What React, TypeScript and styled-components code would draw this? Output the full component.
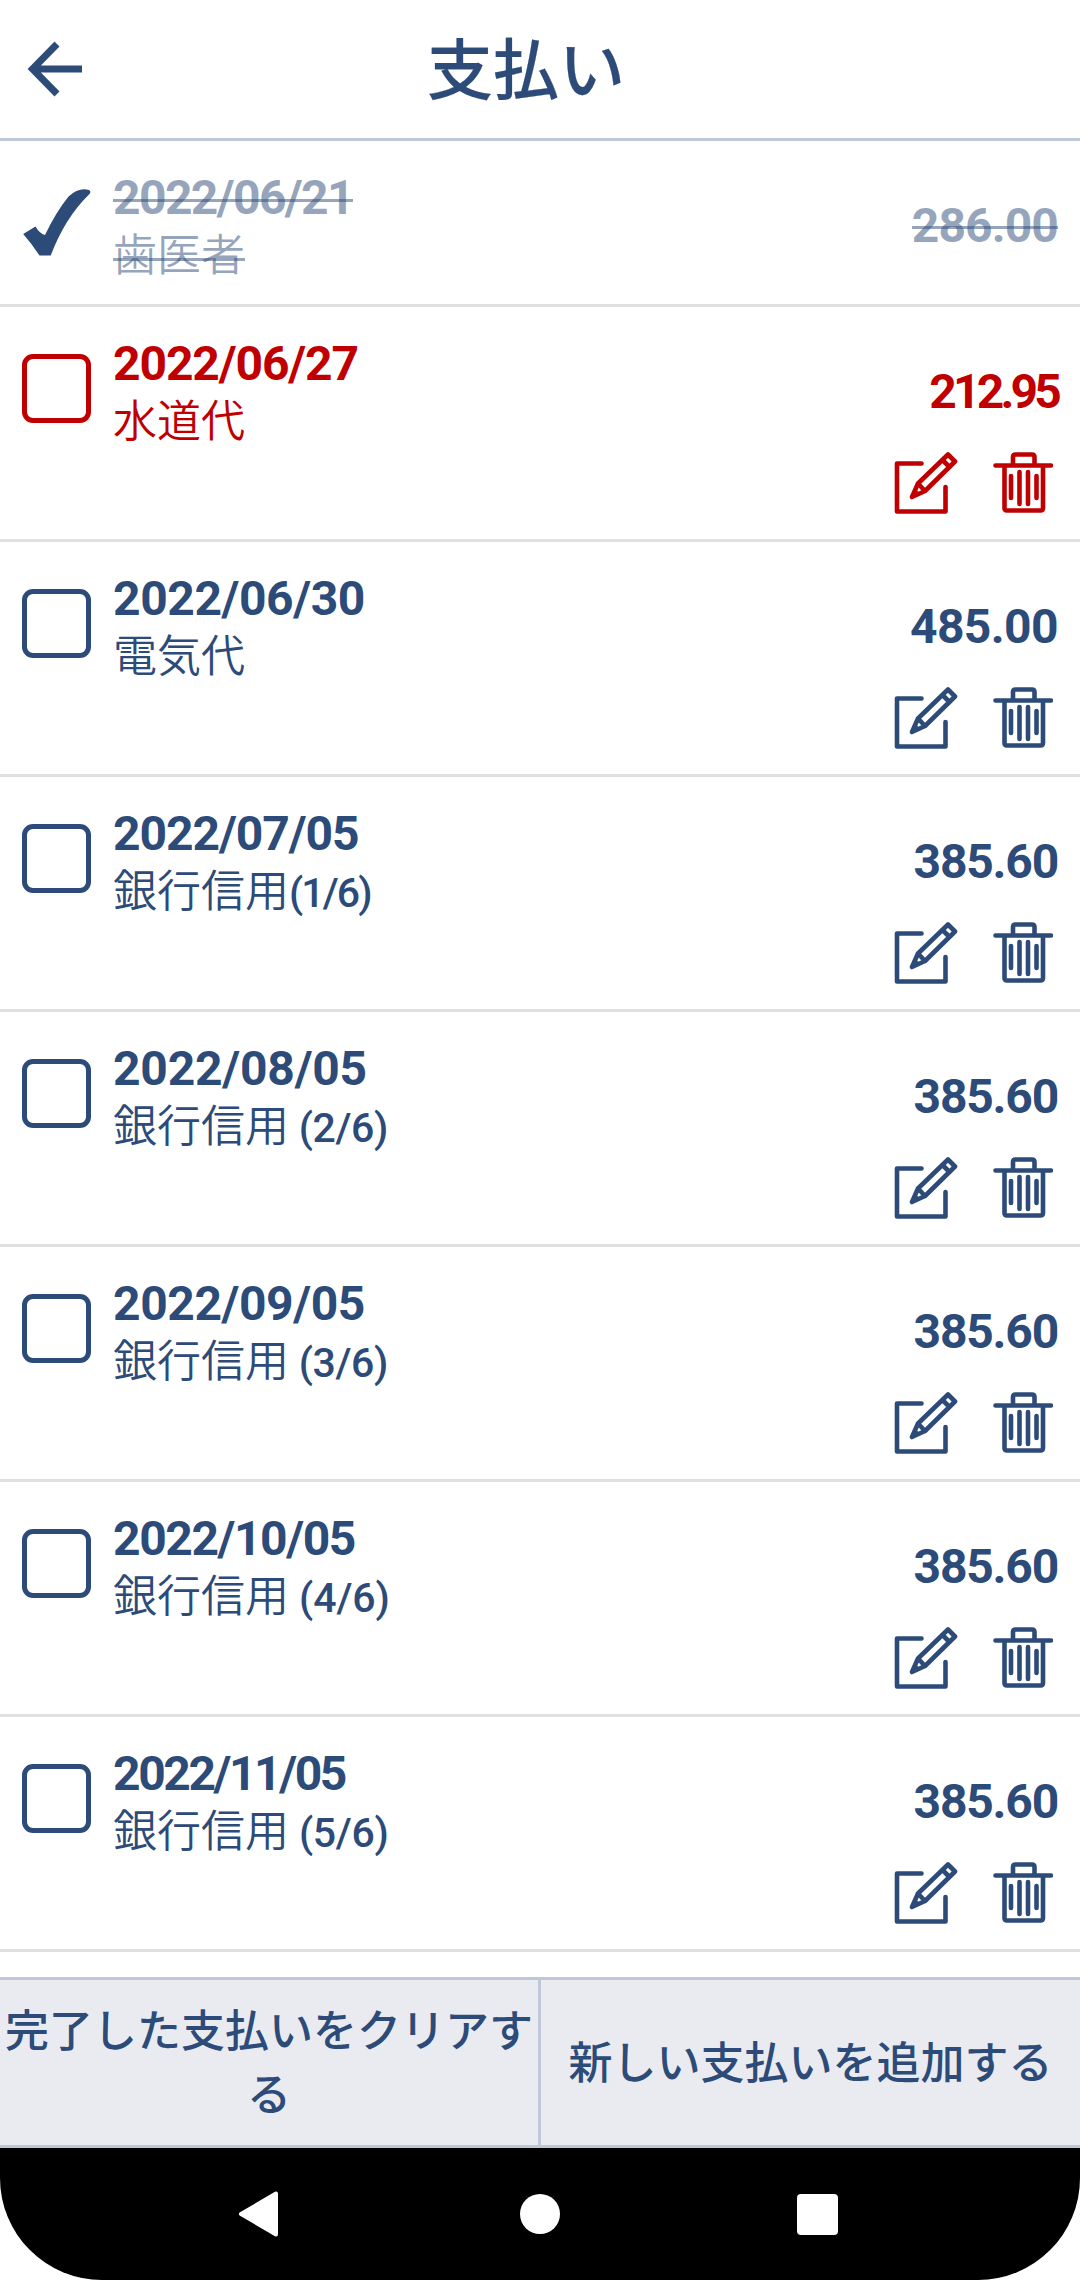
import React from "react";
import styled, { createGlobalStyle } from "styled-components";

const NAVY = "#2d4b78";
const RED = "#c00000";
const FADED = "rgba(45, 75, 120, 0.5)";
const LATIN = 'Roboto, "Noto Sans CJK JP", sans-serif';
const JP = '"Noto Sans CJK JP", sans-serif';

const Global = createGlobalStyle`
  * { box-sizing: border-box; }
  body { margin: 0; background: #fff; }
  button { border: 0; background: none; padding: 0; margin: 0; font: inherit; color: inherit; }
`;

const Screen = styled.div`
  width: 1080px;
  height: 2280px;
  display: flex;
  flex-direction: column;
  overflow: hidden;
  background: #fff;
  color: ${NAVY};
`;

const Header = styled.header`
  height: 141px;
  flex: none;
  display: grid;
  grid-template-columns: 110px 1fr 138px;
  align-items: center;
  border-bottom: 3px solid #bfc8d6;
`;

const BackButton = styled.button`
  display: flex;
  padding-left: 27px;
`;

const Title = styled.h1`
  margin: 0;
  padding-bottom: 8px;
  text-align: center;
  font: 500 66px/96px ${JP};
  -webkit-text-stroke: 0.2px currentColor;
`;

const List = styled.main`
  flex: 1;
  min-height: 0;
  overflow: hidden;
`;

const Row = styled.section<{ $late?: boolean; $done?: boolean }>`
  height: ${(p) => (p.$done ? 166 : 235)}px;
  display: flex;
  padding: 0 22px;
  border-bottom: 3px solid #e0e0e0;
  color: ${(p) => (p.$late ? RED : NAVY)};
`;

const Mark = styled.div`
  width: 91px;
  padding-top: 47px;
`;

const Checkbox = styled.div`
  width: 69px;
  height: 69px;
  border: 5px solid currentColor;
  border-radius: 11px;
`;

const Details = styled.div<{ $done?: boolean }>`
  flex: 1;
  padding-top: 28px;
  color: ${(p) => (p.$done ? FADED : "inherit")};
`;

const Strike = styled.span<{ $on?: boolean; $at: number }>`
  display: inline-block;
  ${(p) =>
    p.$on &&
    `background: linear-gradient(currentColor, currentColor) 0 ${p.$at}px / 100% 3px no-repeat;`}
`;

const DateText = styled.div<{ $spacing: number }>`
  height: 54px;
  white-space: nowrap;
  font: 700 48px/58px ${LATIN};
  letter-spacing: ${(p) => p.$spacing}px;
`;

const Label = styled.div`
  height: 58px;
  white-space: pre;
  font: 350 44px/58px ${JP};
`;

const Part = styled.span<{ $spacing: number }>`
  font: 500 41px/56px ${LATIN};
  letter-spacing: ${(p) => p.$spacing}px;
`;

const Side = styled.div`
  display: flex;
  flex-direction: column;
  align-items: flex-end;
  padding-top: 56px;
`;

const Amount = styled.div<{ $spacing: number; $done?: boolean }>`
  height: 58px;
  font: 700 48px/58px ${LATIN};
  letter-spacing: ${(p) => p.$spacing}px;
  color: ${(p) => (p.$done ? FADED : "inherit")};
`;

const Actions = styled.div`
  display: flex;
  gap: 35px;
  margin-top: 30px;
  padding-right: 5px;
`;

const IconButton = styled.button`
  display: flex;
`;

const Footer = styled.footer`
  flex: none;
  height: 171px;
  display: grid;
  grid-template-columns: 541px 539px;
  border: solid #bfc8d6;
  border-width: 3px 0;
  background: #eaebf1;
`;

const FooterButton = styled.button<{ $divided?: boolean }>`
  padding-bottom: 6px;
  text-align: center;
  font: 500 44px/64px ${JP};
  color: ${NAVY};
  border-right: ${(p) => (p.$divided ? "3px solid #bfc8d6" : "0")};
`;

const SystemBar = styled.nav`
  flex: none;
  height: 132px;
  background: #000;
  border-radius: 0 0 102px 102px;
  display: flex;
  justify-content: space-between;
  align-items: center;
  padding: 0 242px 0 238px;
`;

const Circle = styled.i`
  width: 40px;
  height: 40px;
  border-radius: 50%;
  background: #fff;
`;

const Square = styled.i`
  width: 41px;
  height: 41px;
  border-radius: 4px;
  background: #fff;
`;

const BackArrow = () => (
  <svg width="56" height="56" viewBox="0 0 56 56" fill="none" stroke="currentColor" strokeWidth="7">
    <path d="M55 28H6M30 3L5.500 28L30 53" />
  </svg>
);

const Check = () => (
  <svg width="69" height="69" viewBox="0 0 69 69" fill="currentColor">
    <path d="M1.200 46L13.500 38.500Q17.500 45.500 23 47Q34 24 46.500 8.500Q57-1 67 2Q70 4 66.500 7Q43 30 28.700 67.500H17.500Q10 56 1.200 46Z" />
  </svg>
);

const EditIcon = () => (
  <svg width="64" height="64" viewBox="0 0 64 64" fill="none" stroke="currentColor" strokeWidth="4.600" strokeLinecap="round" strokeLinejoin="round">
    <path d="M27.500 12.500H3V60.500H51.500V36" />
    <path d="M54 3.500L61 10.500L31 40L18 46L24 32.500Z M24 32.500L31 40M48.500 9L55.500 16" />
    <path d="M18 46L21 39L25 43Z" fill="currentColor" strokeWidth="2" />
  </svg>
);

const TrashIcon = () => (
  <svg width="60" height="64" viewBox="0 0 60 64" fill="none" stroke="currentColor" strokeWidth="4.600" strokeLinecap="round" strokeLinejoin="round">
    <path d="M2.500 14.500H58M20 14V6Q20 3.500 22.500 3.500H39Q41.500 3.500 41.500 6V14M11.500 15V57Q11.500 59.500 14 59.500H47.500Q50 59.500 50 57V15" />
    <path d="M18 25V47M26.500 21V53M35 21V53M43.500 25V47" />
  </svg>
);

interface Payment {
  date: string;
  label: string;
  part?: string;
  amount: string;
  dateSpacing: number;
  partSpacing?: number;
  amountSpacing: number;
  done?: boolean;
  late?: boolean;
}

const payments: Payment[] = [
  { date: "2022/06/21", label: "歯医者", amount: "286.00", dateSpacing: -1.6, amountSpacing: -0.9, done: true },
  { date: "2022/06/27", label: "水道代", amount: "212.95", dateSpacing: -1.1, amountSpacing: -3.8, late: true },
  { date: "2022/06/30", label: "電気代", amount: "485.00", dateSpacing: -0.4, amountSpacing: -0.6 },
  { date: "2022/07/05", label: "銀行信用", part: "(1/6)", amount: "385.60", dateSpacing: -1.05, partSpacing: -1.9, amountSpacing: -1.2 },
  { date: "2022/08/05", label: "銀行信用", part: " (2/6)", amount: "385.60", dateSpacing: -0.2, partSpacing: -0.4, amountSpacing: -1.2 },
  { date: "2022/09/05", label: "銀行信用", part: " (3/6)", amount: "385.60", dateSpacing: -0.4, partSpacing: -0.4, amountSpacing: -1.2 },
  { date: "2022/10/05", label: "銀行信用", part: " (4/6)", amount: "385.60", dateSpacing: -1.4, partSpacing: -0.1, amountSpacing: -1.2 },
  { date: "2022/11/05", label: "銀行信用", part: " (5/6)", amount: "385.60", dateSpacing: -2.4, partSpacing: -0.3, amountSpacing: -1.2 },
];

const PaymentRow = ({ item }: { item: Payment }) => (
  <Row $late={item.late} $done={item.done}>
    <Mark>{item.done ? <Check /> : <Checkbox />}</Mark>
    <Details $done={item.done}>
      <DateText $spacing={item.dateSpacing}>
        <Strike $on={item.done} $at={30}>{item.date}</Strike>
      </DateText>
      <Label>
        <Strike $on={item.done} $at={35}>{item.label}</Strike>
        {item.part && <Part $spacing={item.partSpacing ?? 0}>{item.part}</Part>}
      </Label>
    </Details>
    <Side>
      <Amount $spacing={item.amountSpacing} $done={item.done}>
        <Strike $on={item.done} $at={29}>{item.amount}</Strike>
      </Amount>
      {!item.done && (
        <Actions>
          <IconButton><EditIcon /></IconButton>
          <IconButton><TrashIcon /></IconButton>
        </Actions>
      )}
    </Side>
  </Row>
);

export default function App() {
  return (
    <>
      <Global />
      <Screen>
        <Header>
          <BackButton><BackArrow /></BackButton>
          <Title>支払い</Title>
        </Header>
        <List>
          {payments.map((item) => (
            <PaymentRow key={item.date} item={item} />
          ))}
        </List>
        <Footer>
          <FooterButton $divided>完了した支払いをクリアする</FooterButton>
          <FooterButton>新しい支払いを追加する</FooterButton>
        </Footer>
        <SystemBar>
          <svg width="45" height="46" viewBox="0 0 45 46" fill="#fff" stroke="#fff" strokeWidth="4" strokeLinejoin="round">
            <path d="M3 23L38 2.500V43.500Z" />
          </svg>
          <Circle />
          <Square />
        </SystemBar>
      </Screen>
    </>
  );
}
